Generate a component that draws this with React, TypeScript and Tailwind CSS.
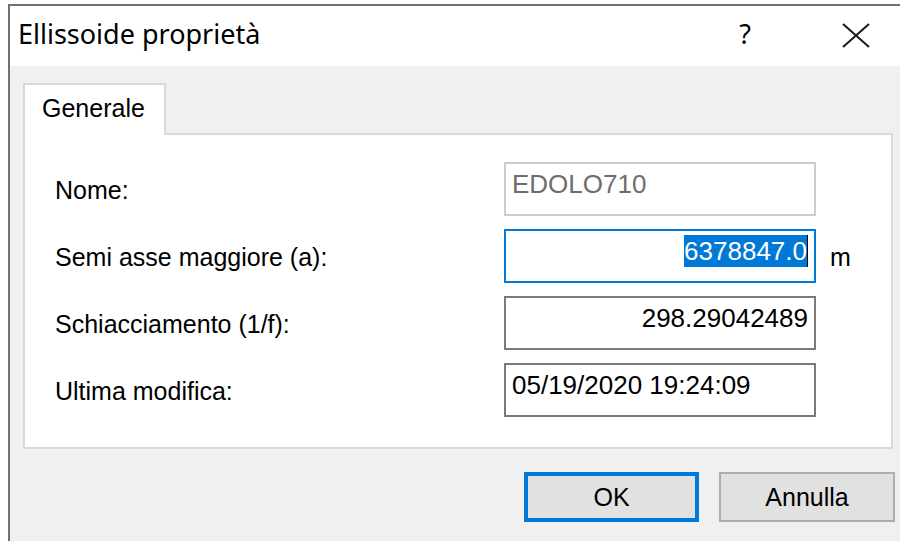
const label = "font-['Liberation_Sans',Arial,sans-serif] text-[25px] leading-[30px] text-black";

type Field = {
  label: string;
  value: string;
  kind: "disabled" | "focused" | "normal";
  align: "left" | "right";
  unit?: string;
};

const fields: Field[] = [
  { label: "Nome:", value: "EDOLO710", kind: "disabled", align: "left" },
  { label: "Semi asse maggiore (a):", value: "6378847.0", kind: "focused", align: "right", unit: "m" },
  { label: "Schiacciamento (1/f):", value: "298.29042489", kind: "normal", align: "right" },
  { label: "Ultima modifica:", value: "05/19/2020 19:24:09", kind: "normal", align: "left" },
];

function TextBox({ field }: { field: Field }) {
  const border =
    field.kind === "disabled"
      ? "border-[#cccccc] text-[#6d6d6d]"
      : field.kind === "focused"
      ? "border-[#0078d7] text-black"
      : "border-[#7a7a7a] text-black";

  return (
    <div
      className={`flex h-[54px] w-[312px] items-start border-2 bg-white px-[6px] pt-[4px] font-['Liberation_Sans',Arial,sans-serif] text-[26px] leading-[32px] ${border} ${
        field.align === "right" ? "justify-end" : "justify-start"
      }`}
    >
      {field.kind === "focused" ? (
        <span className="flex">
          <span className="bg-[#0078d7] text-white">{field.value}</span>
          <span className="h-[32px] w-px bg-black" />
        </span>
      ) : (
        <span>{field.value}</span>
      )}
    </div>
  );
}

function CloseIcon() {
  return (
    <svg width="28" height="25" viewBox="0 0 28 25" className="mt-[7px]">
      <path d="M1 1 L27 24 M27 1 L1 24" stroke="#1a1a1a" strokeWidth="2" fill="none" />
    </svg>
  );
}

export default function App() {
  return (
    <div className="h-[541px] w-[900px] overflow-hidden bg-white pl-[8px] pt-[4px]">
      <div className="flex h-[537px] w-[892px] flex-col border-l-2 border-t-2 border-[#707070]">
        {/* title bar */}
        <div className="flex h-[60px] shrink-0 items-start justify-between bg-white pl-[8px] pr-[30px] pt-[10px] font-['Noto_Sans',sans-serif] text-[27px] leading-[36px] text-black">
          <span>Ellissoide proprietà</span>
          <div className="flex items-start gap-[91px]">
            <span>?</span>
            <CloseIcon />
          </div>
        </div>

        {/* body */}
        <div className="flex flex-1 flex-col bg-[#f0f0f0] pl-[13px] pr-[5px] pt-[17px]">
          <div className="relative z-10 -mb-[2px] h-[52px] w-[143px] border-2 border-b-0 border-[#d9d9d9] bg-white pl-[17px] pt-[8px]">
            <span className={label}>Generale</span>
          </div>

          <div className="h-[316px] w-[870px] border-2 border-[#d9d9d9] bg-white pl-[30px] pt-[27px]">
            <div className="grid grid-cols-[449px_312px_auto] items-center gap-y-[13px]">
              {fields.map((f) => (
                <div key={f.label} className="contents">
                  <span className={`${label} mt-[2px]`}>{f.label}</span>
                  <TextBox field={f} />
                  <span className={`${label} mt-[2px] pl-[14px]`}>{f.unit ?? ""}</span>
                </div>
              ))}
            </div>
          </div>

          <div className="mt-[23px] flex justify-end gap-[20px]">
            <button className="h-[50px] w-[175px] border-4 border-[#0078d7] bg-[#e1e1e1] font-['Liberation_Sans',Arial,sans-serif] text-[25px] leading-[30px] text-black">
              OK
            </button>
            <button className="h-[50px] w-[176px] border-2 border-[#adadad] bg-[#e1e1e1] font-['Liberation_Sans',Arial,sans-serif] text-[25px] leading-[30px] text-black">
              Annulla
            </button>
          </div>
        </div>
      </div>
    </div>
  );
}
